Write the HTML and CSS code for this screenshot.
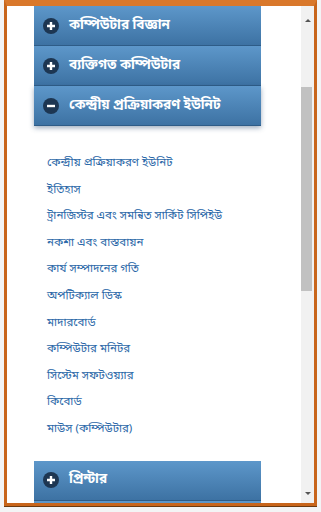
FILE: index.html
```html
<!DOCTYPE html>
<html lang="bn">
<head>
    <meta charset="UTF-8">
    <meta name="viewport" content="width=device-width, initial-scale=1.0">
    <title>কম্পিউটার</title>
    <link rel="stylesheet" href="styles.css">
</head>
<body>
    <div class="window">
        <div class="page">
            <div class="content">
                <div class="accordion">
                    <div class="acc-head">
                        <span class="acc-icon">
                            <svg viewBox="0 0 16 16" width="16" height="16"><circle cx="8" cy="8" r="8" fill="#1d3652"/><path d="M4 8h8M8 4v8" stroke="#fff" stroke-width="2.4"/></svg>
                        </span>
                        কম্পিউটার বিজ্ঞান
                    </div>
                    <div class="acc-head">
                        <span class="acc-icon">
                            <svg viewBox="0 0 16 16" width="16" height="16"><circle cx="8" cy="8" r="8" fill="#1d3652"/><path d="M4 8h8M8 4v8" stroke="#fff" stroke-width="2.4"/></svg>
                        </span>
                        ব্যক্তিগত কম্পিউটার
                    </div>
                    <div class="acc-head active">
                        <span class="acc-icon">
                            <svg viewBox="0 0 16 16" width="16" height="16"><circle cx="8" cy="8" r="8" fill="#1d3652"/><path d="M4 8h8" stroke="#fff" stroke-width="2.4"/></svg>
                        </span>
                        কেন্দ্রীয় প্রক্রিয়াকরণ ইউনিট
                    </div>

                    <ul class="acc-list">
                        <li><a href="#">কেন্দ্রীয় প্রক্রিয়াকরণ ইউনিট</a></li>
                        <li><a href="#">ইতিহাস</a></li>
                        <li><a href="#">ট্রানজিস্টর এবং সমন্বিত সার্কিট সিপিইউ</a></li>
                        <li><a href="#">নকশা এবং বাস্তবায়ন</a></li>
                        <li><a href="#">কার্য সম্পাদনের গতি</a></li>
                        <li><a href="#">অপটিক্যাল ডিস্ক</a></li>
                        <li><a href="#">মাদারবোর্ড</a></li>
                        <li><a href="#">কম্পিউটার মনিটর</a></li>
                        <li><a href="#">সিস্টেম সফটওয়্যার</a></li>
                        <li><a href="#">কিবোর্ড</a></li>
                        <li><a href="#">মাউস (কম্পিউটার)</a></li>
                    </ul>

                    <div class="acc-head">
                        <span class="acc-icon">
                            <svg viewBox="0 0 16 16" width="16" height="16"><circle cx="8" cy="8" r="8" fill="#1d3652"/><path d="M4 8h8M8 4v8" stroke="#fff" stroke-width="2.4"/></svg>
                        </span>
                        প্রিন্টার
                    </div>
                    <div class="acc-head"></div>
                </div>
            </div>
            <div class="gutter">
                <div class="scrollbar">
                    <span class="arrow up"></span>
                    <div class="track"><div class="thumb"></div></div>
                    <span class="arrow down"></span>
                </div>
            </div>
        </div>
    </div>
</body>
</html>
```

FILE: styles.css
```css
body {
    margin: 0;
    background-color: #f3f4f5;
    font-family: "Noto Sans Bengali", "Noto Sans", "Liberation Sans", sans-serif;
    height: 512px;
    overflow: hidden;
}

.window {
    margin-left: 4px;
    width: 307px;
    height: 497px;
    border: 3px solid #c8651b;
    border-top: 6px solid #d9782b;
    box-shadow: 0 1px 0 #6b3a10;
    background-color: #fff;
    overflow: hidden;
}

.page {
    display: flex;
    height: 100%;
}

.content {
    width: 280px;
    padding-left: 27px;
    background-color: #fff;
}

.accordion {
    width: 227px;
}

.acc-head {
    display: flex;
    align-items: center;
    height: 39px;
    padding-left: 9px;
    border-bottom: 1px solid #2e5c87;
    background: linear-gradient(to bottom, #5d97ca, #3d72a3);
    color: #fff;
    font-size: 13.5px;
    font-weight: bold;
}

.acc-head.active {
    box-shadow: 0 2px 5px rgba(40, 70, 110, 0.45);
}

.acc-icon {
    display: flex;
    margin-right: 10px;
}

.acc-list {
    list-style: none;
    margin: 0;
    padding: 26px 0 16px 13px;
}

.acc-list li {
    height: 26.6px;
    line-height: 20px;
}

.acc-list a {
    color: #2b68a8;
    font-size: 11.5px;
    text-decoration: none;
}

.gutter {
    flex: 1;
    display: flex;
    justify-content: flex-end;
    background-color: #f1f1f1;
}

.scrollbar {
    width: 13px;
    display: flex;
    flex-direction: column;
    align-items: center;
}

.arrow {
    width: 0;
    height: 0;
    border-left: 3px solid transparent;
    border-right: 3px solid transparent;
}

.arrow.up {
    margin-top: 13px;
    border-bottom: 3px solid #555;
}

.arrow.down {
    margin-bottom: 8px;
    border-top: 3px solid #555;
}

.track {
    flex: 1;
    width: 100%;
}

.thumb {
    margin-top: 65px;
    height: 204px;
    width: 11px;
    background-color: #c1c1c1;
}
```
